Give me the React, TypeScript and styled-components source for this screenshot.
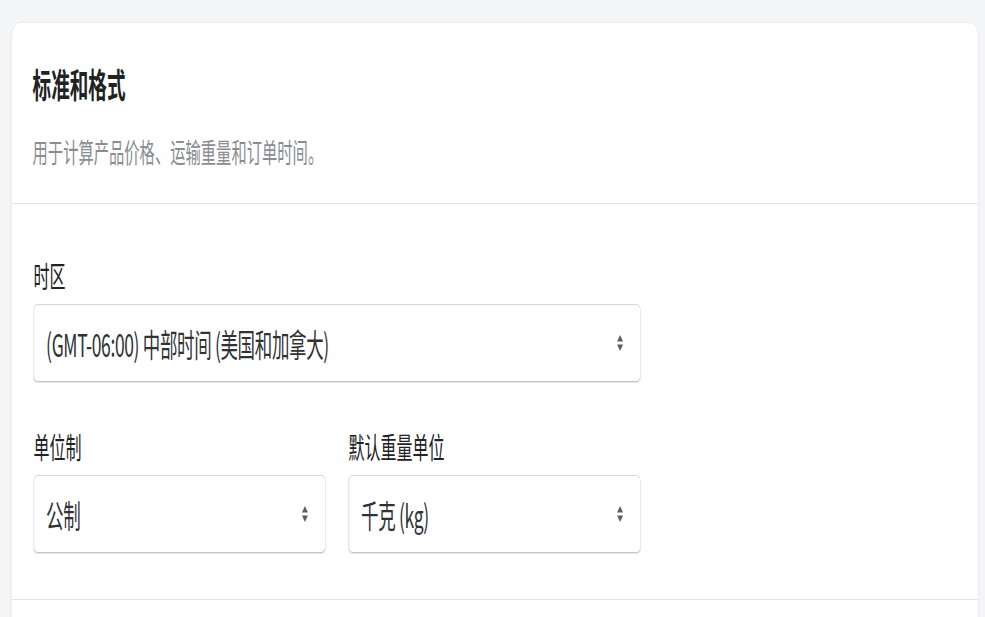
import styled, { createGlobalStyle } from 'styled-components';

// the reference is a wide render squeezed horizontally, so the page is laid
// out at full width and narrowed once at the root
const SQUEEZE = 0.55;

// horizontal sizes are given in screen pixels and widened to pre-squeeze pixels
const h = (px: number) => `${(px / SQUEEZE).toFixed(2)}px`;

const GlobalStyle = createGlobalStyle`
  html, body {
    margin: 0;
    padding: 0;
    background-color: #f4f5f7;
    overflow: hidden;
  }
  * {
    box-sizing: border-box;
  }
`;

const Page = styled.div`
  width: ${h(985)};
  min-height: 617px;
  padding: 22px ${h(6)} 0 ${h(11)};
  transform: scaleX(${SQUEEZE});
  transform-origin: 0 0;
  font-family: 'Noto Sans CJK SC', 'Noto Sans', sans-serif;
  color: #202223;
`;

const Card = styled.section`
  background-color: #fff;
  border: 1px solid #e6e7e9;
  border-left-width: ${h(1)};
  border-right-width: ${h(1)};
  border-radius: 16px;
  min-height: 640px;
  box-shadow: 0 1px 2px rgba(0, 0, 0, 0.04);
`;

const CardHeader = styled.div`
  padding: 41px ${h(21)} 34px;
  border-bottom: 1px solid #e4e5e7;
`;

const Title = styled.h2`
  margin: 0;
  font-size: ${h(18.6)};
  line-height: 40px;
  font-weight: 700;
  color: #202223;
`;

const Subtitle = styled.p`
  margin: 29px 0 0;
  font-size: ${h(15.3)};
  line-height: 36px;
  color: #8a8d91;
`;

const CardBody = styled.div`
  padding: 53px ${h(22)} 46px;
  border-bottom: 1px solid #e4e5e7;
  display: flex;
  flex-direction: column;
  gap: 46px;
`;

const FieldRow = styled.div<{ columns: number }>`
  display: grid;
  width: ${h(607)};
  grid-template-columns: repeat(${p => p.columns}, 1fr);
  gap: ${h(23)};
`;

const Field = styled.label`
  display: flex;
  flex-direction: column;
  gap: 11px;
`;

const Label = styled.span`
  font-size: ${h(16)};
  line-height: 36px;
  color: #202223;
`;

const SelectBox = styled.div`
  height: 78px;
  padding: 0 ${h(17)} 0 ${h(12)};
  display: flex;
  align-items: center;
  justify-content: space-between;
  border: 1px solid #d6d8da;
  border-left-width: ${h(1)};
  border-right-width: ${h(1)};
  border-bottom-color: #c4c6c9;
  border-radius: ${h(4)} / 7px;
  background-color: #fff;
  box-shadow: 0 1px 1px rgba(0, 0, 0, 0.1);
  font-size: ${h(17.5)};
  color: #303234;
`;

const Value = styled.span`
  letter-spacing: -0.02em;
`;

const ArrowIcon = styled.svg`
  width: ${h(6)};
  height: 20px;
  flex-shrink: 0;
`;

const Arrows = () => (
  <ArrowIcon viewBox="0 0 10 20" preserveAspectRatio="none" fill="#5c5f62">
    <path d="M5 2 L10 8.5 H0 Z" />
    <path d="M0 11.5 H10 L5 18 Z" />
  </ArrowIcon>
);

const Select = ({ label, value }: { label: string; value: string }) => (
  <Field>
    <Label>{label}</Label>
    <SelectBox>
      <Value>{value}</Value>
      <Arrows />
    </SelectBox>
  </Field>
);

export default function App() {
  return (
    <>
      <GlobalStyle />
      <Page>
        <Card>
          <CardHeader>
            <Title>标准和格式</Title>
            <Subtitle>用于计算产品价格、运输重量和订单时间。</Subtitle>
          </CardHeader>
          <CardBody>
            <FieldRow columns={1}>
              <Select label="时区" value="(GMT-06:00) 中部时间 (美国和加拿大)" />
            </FieldRow>
            <FieldRow columns={2}>
              <Select label="单位制" value="公制" />
              <Select label="默认重量单位" value="千克 (kg)" />
            </FieldRow>
          </CardBody>
        </Card>
      </Page>
    </>
  );
}
